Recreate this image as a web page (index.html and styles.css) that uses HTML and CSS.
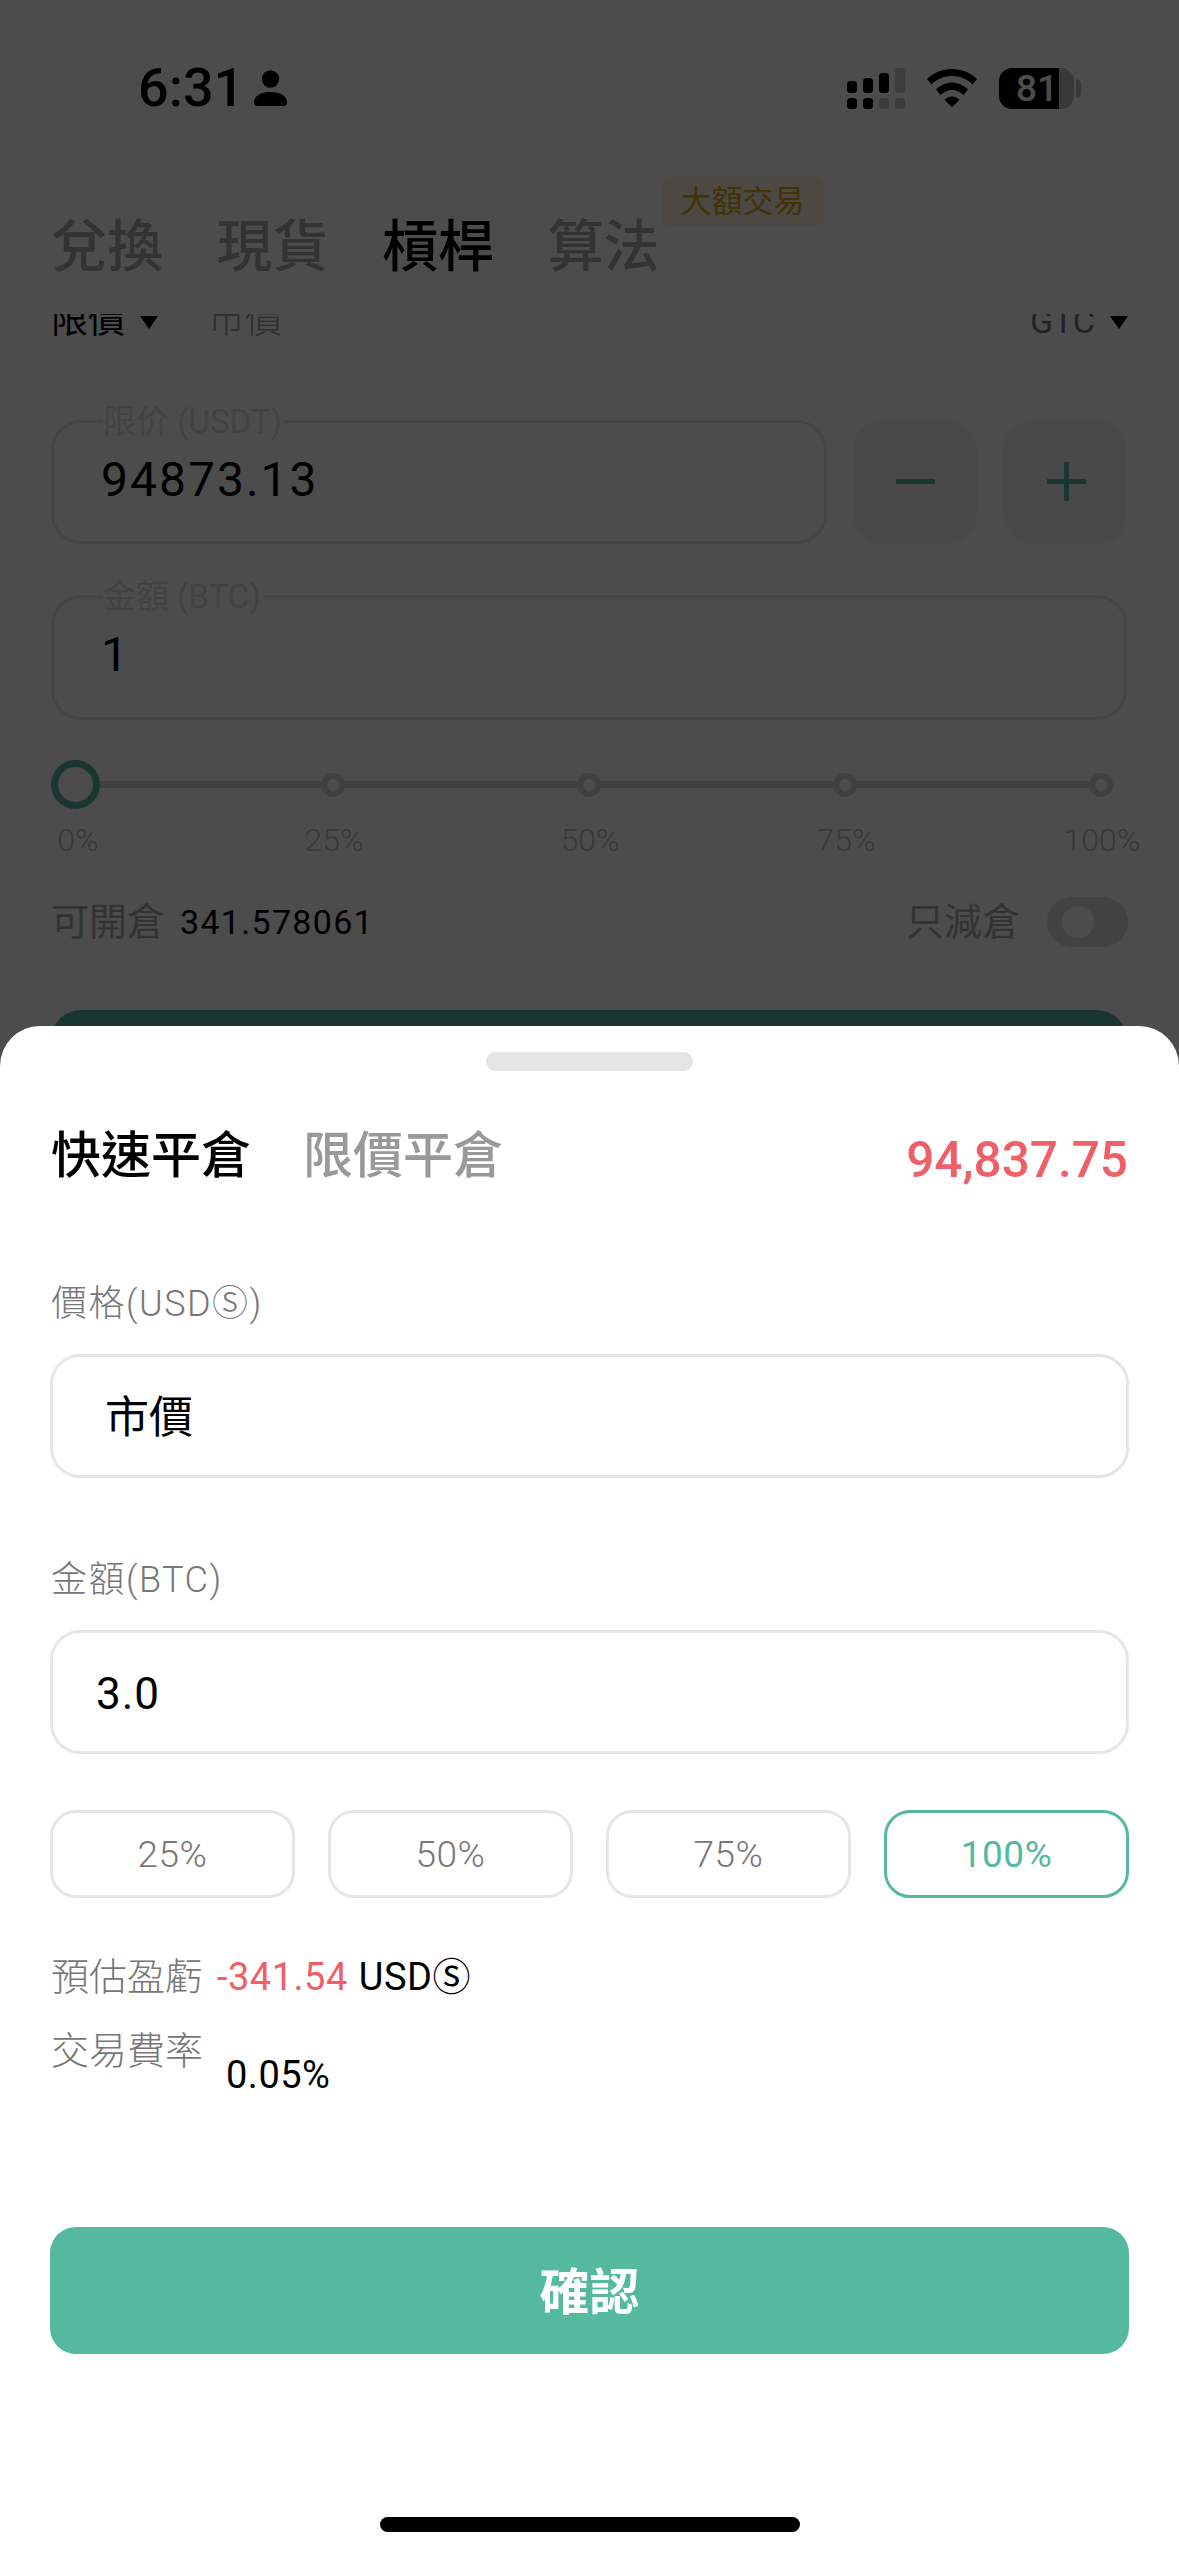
FILE: index.html
```html
<!DOCTYPE html>
<html lang="zh-Hant">
<head>
    <meta charset="UTF-8">
    <meta name="viewport" content="width=device-width, initial-scale=1.0">
    <title>快速平倉</title>
    <link rel="stylesheet" href="styles.css">
</head>
<body>
    <div class="page">
        <div class="status-bar">
            <div class="status-left">
                <span class="clock">6:31</span>
                <svg class="person" width="33" height="36" viewBox="0 0 33 36">
                    <circle cx="16.5" cy="9" r="8.7"/>
                    <path d="M0 32C0 26 7 22 16.5 22C26 22 33 26 33 32C33 35 32 36 29 36H4C1 36 0 35 0 32Z"/>
                </svg>
            </div>
            <div class="status-right">
                <svg width="58" height="41" viewBox="0 0 58 41">
                    <rect x="0" y="13" width="10" height="12" rx="3.5"/>
                    <rect x="16" y="10" width="10" height="15" rx="3.5"/>
                    <rect x="32" y="5" width="10" height="20" rx="3.5"/>
                    <rect x="48" y="0" width="10" height="25" rx="3.5" fill="#c8c8c8"/>
                    <rect x="0" y="30" width="10" height="11" rx="3.5"/>
                    <rect x="16" y="30" width="10" height="11" rx="3.5"/>
                    <rect x="32" y="30" width="10" height="11" rx="3.5" fill="#c8c8c8"/>
                    <rect x="48" y="30" width="10" height="11" rx="3.5" fill="#c8c8c8"/>
                </svg>
                <svg width="50" height="38" viewBox="0 0 50 38">
                    <path d="M0 10C7 3.5 15.5 0 25 0C34.5 0 43 3.5 50 10L45.5 15.5C40 10 33 7 25 7C17 7 10 10 4.5 15.5Z"/>
                    <path d="M9 20.5C13 16.5 19 13.5 25 13.5C31 13.5 37 16.5 41 20.5L36.5 26C33.5 23 29.5 21 25 21C20.5 21 16.5 23 13.5 26Z"/>
                    <path d="M17.5 31C19.5 29 22 27.5 25 27.5C28 27.5 30.5 29 32.5 31L25 38Z"/>
                </svg>
                <div class="battery">81</div>
            </div>
        </div>

        <div class="trade-tabs">
            <span class="trade-tab">兌換</span>
            <span class="trade-tab">現貨</span>
            <span class="trade-tab trade-tab-active">槓桿</span>
            <span class="trade-tab trade-tab-algo">算法<span class="badge">大額交易</span></span>
        </div>

        <div class="trade-body">
            <div class="order-row">
                <span class="order-type">限價<i class="caret"></i></span>
                <span class="order-type order-type-off">市價</span>
                <span class="order-tif">GTC<i class="caret"></i></span>
            </div>

            <div class="price-row">
                <div class="field field-price">
                    <span class="field-label">限价 (USDT)</span>
                    <span class="field-value">94873.13</span>
                </div>
                <div class="stepper"><i class="step-minus"></i></div>
                <div class="stepper"><i class="step-plus"></i></div>
            </div>

            <div class="field field-amount">
                <span class="field-label">金額 (BTC)</span>
                <span class="field-value">1</span>
            </div>

            <div class="slider">
                <i class="stop stop-current"></i>
                <i class="stop stop-first"></i>
                <i class="stop"></i>
                <i class="stop"></i>
                <i class="stop"></i>
            </div>
            <div class="slider-labels">
                <span>0%</span>
                <span>25%</span>
                <span>50%</span>
                <span>75%</span>
                <span>100%</span>
            </div>

            <div class="avail-row">
                <div class="avail-left">可開倉<span class="avail-num">341.578061</span></div>
                <div class="avail-right">只減倉<i class="toggle"></i></div>
            </div>

            <div class="open-button"></div>
        </div>
    </div>

    <div class="scrim"></div>

    <div class="sheet">
        <div class="handle"></div>

        <div class="sheet-tabs">
            <span class="sheet-tab sheet-tab-active">快速平倉</span>
            <span class="sheet-tab">限價平倉</span>
            <span class="sheet-price">94,837.75</span>
        </div>

        <div class="sheet-label sheet-label-first">價格(USDⓈ)</div>
        <div class="input input-market">市價</div>

        <div class="sheet-label">金額(BTC)</div>
        <div class="input input-qty">3.0</div>

        <div class="pct-row">
            <div class="pct">25%</div>
            <div class="pct">50%</div>
            <div class="pct">75%</div>
            <div class="pct pct-active">100%</div>
        </div>

        <div class="stat-row stat-pnl">
            <span class="stat-name">預估盈虧</span>
            <span class="stat-loss">-341.54</span>
            <span class="stat-unit">USDⓈ</span>
        </div>
        <div class="stat-row stat-fee">
            <span class="stat-name">交易費率</span>
            <span class="stat-rate">0.05%</span>
        </div>

        <button class="confirm">確認</button>

        <div class="home-bar"></div>
    </div>
</body>
</html>
```

FILE: styles.css
```css
* {
    box-sizing: border-box;
}
html, body {
    margin: 0;
    padding: 0;
}
body {
    width: 1179px;
    height: 2556px;
    position: relative;
    overflow: hidden;
    background-color: #fff;
    color: #000;
    font-family: "Roboto", "Noto Sans CJK TC", sans-serif;
}
i {
    display: block;
}
.page {
    height: 2556px;
    display: flex;
    flex-direction: column;
}

/* status bar */
.status-bar {
    height: 176px;
    padding: 0 105px 0 138px;
    display: flex;
    justify-content: space-between;
    align-items: center;
    flex-shrink: 0;
}
.status-left {
    display: flex;
    align-items: center;
    gap: 10px;
}
.clock {
    font-size: 54px;
    line-height: 60px;
    font-weight: 500;
}
.status-right {
    display: flex;
    align-items: center;
    gap: 22px;
}
.battery {
    width: 75px;
    height: 41px;
    position: relative;
    border-radius: 13px;
    background: linear-gradient(to right, #000 80%, #c0c0c0 80%);
    color: #fff;
    font-size: 37px;
    line-height: 41px;
    font-weight: 500;
    padding-left: 17px;
}
.battery::after {
    content: "";
    position: absolute;
    right: -7px;
    top: 11px;
    width: 5px;
    height: 19px;
    border-radius: 0 5px 5px 0;
    background-color: #c0c0c0;
}

/* tabs under the sheet */
.trade-tabs {
    margin-top: 36px;
    height: 102px;
    padding: 0 51px;
    display: flex;
    gap: 53.5px;
    flex-shrink: 0;
}
.trade-tab {
    font-size: 56px;
    line-height: 70px;
    font-weight: 500;
    color: #aaa;
}
.trade-tab-active {
    color: #000;
}
.trade-tab-algo {
    position: relative;
}
.badge {
    position: absolute;
    left: 114px;
    top: -35px;
    width: 162px;
    height: 49px;
    border-radius: 8px;
    background-color: #fdf6e3;
    color: #e2a80c;
    font-size: 31px;
    line-height: 49px;
    font-weight: 400;
    text-align: center;
    white-space: nowrap;
}

.trade-body {
    flex: 1;
    overflow: hidden;
}
.order-row {
    margin-top: -15px;
    height: 44px;
    padding: 0 51px 0 51px;
    display: flex;
    align-items: center;
}
.order-type {
    display: flex;
    align-items: flex-start;
    font-size: 37px;
    line-height: 44px;
    margin-right: 50px;
}
.order-type-off {
    color: #999;
    font-weight: 300;
}
.order-tif {
    margin-left: auto;
    display: flex;
    align-items: flex-start;
    font-size: 34px;
    line-height: 44px;
    color: #777;
}
.caret {
    width: 0;
    height: 0;
    margin: 17px 0 0 15px;
    border-left: 9px solid transparent;
    border-right: 9px solid transparent;
    border-top: 13px solid #000;
}

.price-row {
    margin-top: 77px;
    padding: 0 52px 0 51px;
    display: flex;
    gap: 26px;
}
.field {
    position: relative;
    height: 124px;
    border: 3px solid #e6e6e6;
    border-radius: 30px;
    padding-left: 47px;
    display: flex;
    align-items: center;
}
.field-price {
    width: 776px;
}
.field-amount {
    margin: 51px 52px 0 51px;
    height: 125px;
}
.field-label {
    position: absolute;
    left: 49px;
    top: -19px;
    padding-right: 2px;
    background-color: #fff;
    color: #ddd;
    font-size: 33px;
    line-height: 36px;
}
.field-value {
    font-size: 48px;
    letter-spacing: 2px;
    margin-top: -6px;
}
.stepper {
    width: 124px;
    height: 124px;
    border-radius: 30px;
    background-color: #f5f5f5;
    position: relative;
}
.step-minus,
.step-plus {
    position: absolute;
    left: 43px;
    top: 59px;
    width: 39px;
    height: 5px;
    background-color: #55b9a0;
}
.step-plus {
    left: 44px;
}
.step-plus::after {
    content: "";
    position: absolute;
    left: 17px;
    top: -17px;
    width: 5px;
    height: 39px;
    background-color: #55b9a0;
}

/* leverage slider */
.slider {
    position: relative;
    margin: 40px 0 0 51px;
    height: 49px;
    display: flex;
    align-items: center;
    gap: 232px;
}
.slider::before {
    content: "";
    position: absolute;
    left: 40px;
    width: 1000px;
    top: 21px;
    height: 7px;
    background-color: #d8d8d8;
}
.stop {
    position: relative;
    width: 24px;
    height: 24px;
    border-radius: 50%;
    border: 6px solid #d8d8d8;
    background-color: #fff;
}
.stop-current {
    width: 49px;
    height: 49px;
    border: 7px solid #55b9a0;
}
.stop-first {
    margin-left: -11px;
}
.slider-labels {
    margin: 14px 0 0 28px;
    display: flex;
    gap: 156px;
}
.slider-labels span {
    width: 100px;
    text-align: center;
    color: #bbb;
    font-size: 32px;
    line-height: 34px;
    font-weight: 300;
}

.avail-row {
    margin-top: 40px;
    padding: 0 51px 0 51px;
    height: 50px;
    display: flex;
    justify-content: space-between;
    align-items: center;
}
.avail-left,
.avail-right {
    display: flex;
    align-items: center;
    color: #aaa;
    font-size: 38px;
    line-height: 50px;
}
.avail-num {
    margin-left: 15px;
    color: #000;
    font-size: 34px;
    letter-spacing: 1.3px;
}
.toggle {
    position: relative;
    margin-left: 27px;
    width: 81px;
    height: 50px;
    border-radius: 25px;
    background-color: #dcdcdc;
}
.toggle::after {
    content: "";
    position: absolute;
    left: 15px;
    top: 9px;
    width: 32px;
    height: 32px;
    border-radius: 50%;
    background-color: #fff;
}
.open-button {
    margin: 63px 52px 0 51px;
    height: 127px;
    border-radius: 30px;
    background-color: #55b9a0;
}

.scrim {
    position: absolute;
    left: 0;
    top: 0;
    width: 1179px;
    height: 2556px;
    background-color: rgba(0, 0, 0, 0.7);
}

/* bottom sheet */
.sheet {
    position: absolute;
    left: 0;
    right: 0;
    top: 1026px;
    bottom: 0;
    padding: 26px 50px 0;
    border-radius: 40px 40px 0 0;
    background-color: #fff;
    display: flex;
    flex-direction: column;
}
.handle {
    align-self: center;
    width: 207px;
    height: 19px;
    border-radius: 10px;
    background-color: #e4e4e4;
}
.sheet-tabs {
    margin-top: 55px;
    padding: 0 1px;
    display: flex;
    align-items: center;
    gap: 52px;
}
.sheet-tab {
    font-size: 50px;
    line-height: 60px;
    font-weight: 500;
    color: #999;
}
.sheet-tab-active {
    color: #000;
}
.sheet-price {
    margin: 4px 0 -4px auto;
    color: #ee5f67;
    font-size: 49.5px;
    line-height: 60px;
    font-weight: 500;
}
.sheet-label {
    margin-top: 77px;
    padding-left: 1px;
    color: #777;
    font-size: 36px;
    letter-spacing: 1.5px;
    line-height: 50px;
    font-weight: 300;
}
.sheet-label-first {
    margin-top: 93px;
}
.input {
    margin-top: 25px;
    height: 124px;
    border: 3px solid #e6e6e6;
    border-radius: 30px;
    display: flex;
    align-items: center;
    font-size: 44px;
}
.input-market {
    padding-left: 52px;
    padding-bottom: 5px;
}
.input-qty {
    padding-left: 43px;
    padding-top: 3px;
    letter-spacing: 1px;
}
.pct-row {
    margin-top: 56px;
    display: grid;
    grid-template-columns: repeat(4, 245px);
    gap: 33px;
}
.pct {
    height: 88px;
    border: 3px solid #e6e6e6;
    border-radius: 26px;
    color: #777;
    font-size: 37px;
    letter-spacing: 0.5px;
    font-weight: 300;
    display: flex;
    justify-content: center;
    align-items: center;
}
.pct-active {
    border-color: #55b9a0;
    color: #55b9a0;
    font-weight: 400;
}
.stat-row {
    display: flex;
    align-items: flex-start;
    padding-left: 1px;
    font-size: 38px;
    letter-spacing: 0.5px;
    line-height: 50px;
}
.stat-pnl {
    margin-top: 54px;
    gap: 14px;
}
.stat-fee {
    margin-top: 24px;
    gap: 23px;
}
.stat-name {
    color: #777;
    letter-spacing: 0;
    font-weight: 300;
}
.stat-loss {
    color: #ee5f67;
}
.stat-unit {
    margin-left: -3px;
}
.stat-rate {
    margin-top: 24px;
}
.confirm {
    margin-top: 127px;
    height: 127px;
    padding: 0 0 6px;
    border: none;
    border-radius: 26px;
    background-color: #55b9a0;
    color: #fff;
    font-family: inherit;
    font-size: 50px;
    font-weight: 700;
}
.home-bar {
    margin-top: auto;
    margin-bottom: 24px;
    align-self: center;
    width: 420px;
    height: 15px;
    border-radius: 8px;
    background-color: #000;
}
```
